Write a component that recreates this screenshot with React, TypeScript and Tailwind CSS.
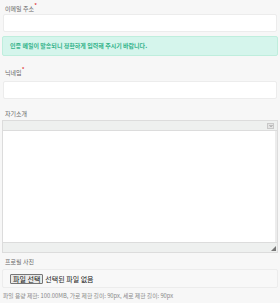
import { ChevronDown } from "lucide-react";

function Label({ text, required }: { text: string; required?: boolean }) {
    return (
        <div className="pl-[3px] h-[8px] flex">
            <span className="relative text-[6px] leading-[8px] text-[#666]">
                {text}
                {required && <span className="absolute -right-[3px] -top-[2px] text-[6px] leading-[6px] text-[#e02020]">*</span>}
            </span>
        </div>
    );
}

export default function App() {
    return (
        <div className="w-[280px] h-[303px] bg-[#f7f7f7] px-[2px] pt-[5px] flex flex-col text-[6px] leading-[8px] font-['Noto_Sans_CJK_KR','Noto_Sans',sans-serif] overflow-hidden">
            <Label text="이메일 주소" required />
            <div className="mt-[1px] h-[18px] mx-[1px] bg-white border border-[#ececec] rounded-[2px]" />
            <div className="mt-[4px] h-[20px] bg-[#d5f5ec] border border-[#bfeedd] rounded-[2px] flex items-center px-[7px]">
                <span className="text-[6px] leading-[8px] font-bold text-[#32b38a]">인증 메일이 발송되니 정확하게 입력해 주시기 바랍니다.</span>
            </div>

            <div className="mt-[13px]">
                <Label text="닉네임" required />
            </div>
            <div className="mt-[4px] h-[18px] mx-[1px] bg-white border border-[#ececec] rounded-[2px]" />

            <div className="mt-[11px]">
                <Label text="자기소개" />
            </div>
            <div className="mt-[2px] border border-[#dcdcdc] flex flex-col">
                <div className="h-[10px] bg-[#eef0ef] border-b border-[#dcdcdc] flex items-center justify-end pr-[3px]">
                    <div className="w-[7px] h-[6px] bg-[#e4e4e4] border border-[#c8c8c8] flex items-center justify-center">
                        <ChevronDown className="w-[4px] h-[4px] text-[#555]" strokeWidth={4} />
                    </div>
                </div>
                <div className="h-[111px] bg-white border-r-[2px] border-[#ececec]" />
                <div className="h-[10px] bg-[#eef0ef] border-t border-[#dcdcdc] flex items-end justify-end pr-[1px] pb-[1px]">
                    <svg width="5" height="5" viewBox="0 0 5 5">
                        <path d="M5 0L0 5H5Z" fill="#777" />
                    </svg>
                </div>
            </div>

            <div className="mt-[5px]">
                <Label text="프로필 사진" />
            </div>
            <div className="mt-[3px] h-[19px] bg-[#f8f8f8] border border-[#ececec] rounded-[2px] flex items-center pl-[7px] gap-[2px]">
                <button className="h-[10px] px-[2px] bg-[#e9e9e9] border border-[#767676] rounded-[1px] text-[7px] leading-[8px] text-[#111]">파일 선택</button>
                <span className="text-[7px] leading-[8px] text-[#222]">선택된 파일 없음</span>
            </div>
            <div className="mt-[4px] pl-[1px] text-[5.8px] leading-[7px] text-[#888]">
                파일 용량 제한: 100.00MB, 가로 제한 길이: 90px, 세로 제한 길이: 90px
            </div>
        </div>
    );
}
